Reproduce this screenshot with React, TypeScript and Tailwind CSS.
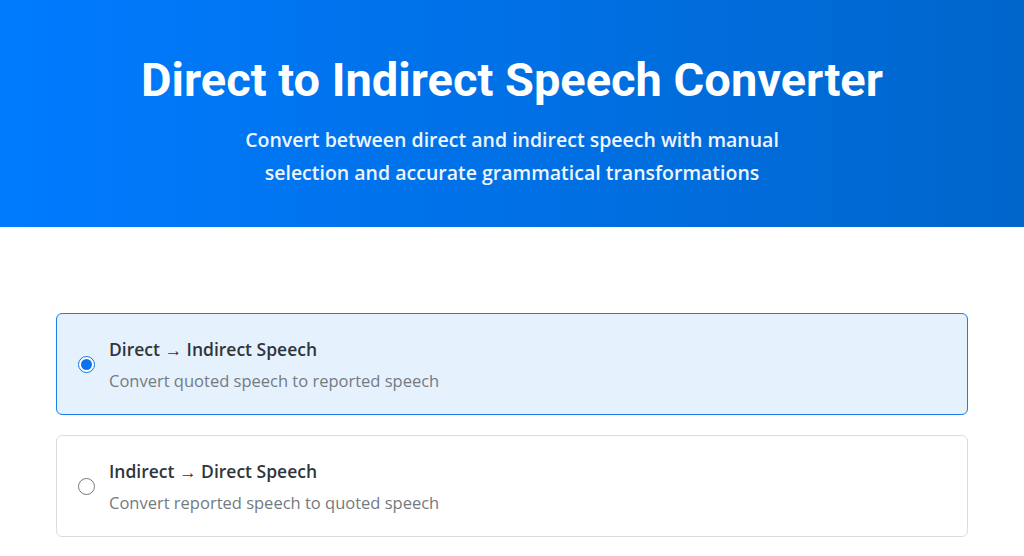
const modes = [
  {
    id: "direct",
    title: "Direct → Indirect Speech",
    detail: "Convert quoted speech to reported speech",
  },
  {
    id: "indirect",
    title: "Indirect → Direct Speech",
    detail: "Convert reported speech to quoted speech",
  },
];

function ModeOption({ title, detail, selected }: { title: string; detail: string; selected: boolean }) {
  return (
    <label
      className={
        selected
          ? "flex h-[102px] cursor-pointer items-center gap-[14px] rounded-[6px] border-[1.5px] border-[#1a80ea] bg-[#e6f1fe] pl-[21px] pr-[19px]"
          : "flex h-[102px] cursor-pointer items-center gap-[14px] rounded-[6px] border-[1.5px] border-[#dcdcdc] bg-white pl-[21px] pr-[19px]"
      }
    >
      <span
        className={
          selected
            ? "flex h-[17px] w-[17px] shrink-0 items-center justify-center rounded-full border border-[#0a74f0] bg-white"
            : "flex h-[17px] w-[17px] shrink-0 items-center justify-center rounded-full border border-[#767676] bg-white"
        }
      >
        {selected ? <span className="h-[11px] w-[11px] rounded-full bg-[#0a74f0]" /> : null}
      </span>
      <span className="flex flex-col">
        <span className="text-[17.5px] leading-[26px] font-semibold text-[#30353a]">{title}</span>
        <span className="mt-[7px] text-[16.5px] leading-[24px] text-[#737a80]">{detail}</span>
      </span>
    </label>
  );
}

export default function App() {
  return (
    <div className="min-h-screen bg-white font-['Open_Sans',sans-serif]">
      <header className="flex h-[227px] flex-col items-center bg-gradient-to-r from-[#007bff] to-[#0066cc] pt-[50px] text-white">
        <h1 className="font-['Roboto',sans-serif] text-[47px] leading-[60px] font-bold">
          Direct to Indirect Speech Converter
        </h1>
        <p className="mt-[13px] max-w-[580px] text-center text-[19.5px] leading-[33px] font-semibold text-[#eef5ff]">
          Convert between direct and indirect speech with manual selection and accurate grammatical transformations
        </p>
      </header>
      <main className="mx-auto flex w-[912px] flex-col gap-[20px] pt-[86px]">
        {modes.map((mode) => (
          <ModeOption key={mode.id} title={mode.title} detail={mode.detail} selected={mode.id === "direct"} />
        ))}
      </main>
    </div>
  );
}
